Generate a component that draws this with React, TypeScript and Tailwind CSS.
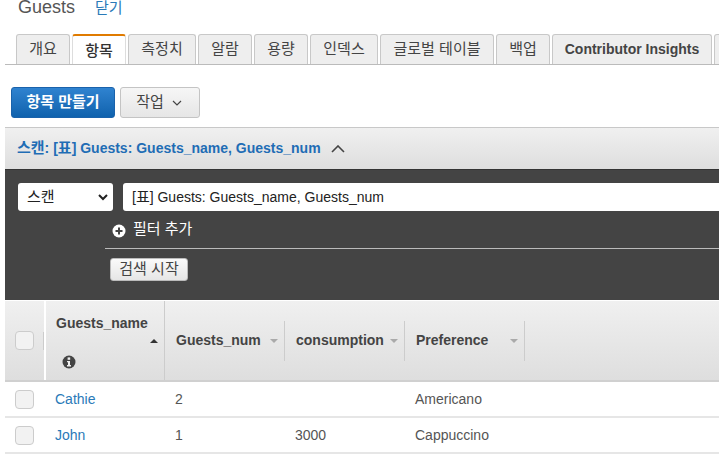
import React from "react";

function Sort({ dark }: { dark?: boolean }) {
  return dark ? (
    <span className="h-0 w-0 border-x-[4px] border-b-[4px] border-x-transparent border-b-[#333]" />
  ) : (
    <span className="h-0 w-0 border-x-[4px] border-t-[4px] border-x-transparent border-t-[#aaa]" />
  );
}

function Check() {
  return <span className="block h-[19px] w-[19px] rounded-[4px] border border-[#ccc] bg-[#f2f2f2]" />;
}

export default function App() {
  const tabBase = "flex h-[30px] shrink-0 items-center justify-center rounded-t-[3px] border border-b-0 border-[#c8c8c8] bg-[#eeeeee] text-[15px] text-[#444]";
  return (
    <div className="h-[455px] w-[719px] overflow-hidden bg-white pl-[5px] font-['Liberation_Sans','Noto_Sans_CJK_KR',sans-serif] text-[14px] text-[#444]">
      <div className="flex h-[15px] items-center pl-[13px]">
        <span className="text-[18px] leading-[15px] text-[#555]">Guests</span>
        <span className="ml-[20px] text-[15px] leading-[15px] text-[#2a7ab8]">닫기</span>
      </div>
      <div className="mt-[19px] flex h-[31px] gap-[2px] overflow-hidden border-b border-[#bbb] pl-[11px]">
        <div className={`${tabBase} w-[54px]`}>개요</div>
        <div className="relative flex h-[31px] w-[54px] shrink-0 items-center justify-center rounded-t-[3px] border-x border-t-2 border-x-[#ddd] border-t-[#e07b00] bg-white pt-[1px] text-[15px] font-medium text-[#333]">항목</div>
        <div className={`${tabBase} w-[68px]`}>측정치</div>
        <div className={`${tabBase} w-[54px]`}>알람</div>
        <div className={`${tabBase} w-[54px]`}>용량</div>
        <div className={`${tabBase} w-[68px]`}>인덱스</div>
        <div className={`${tabBase} w-[114px]`}>글로벌 테이블</div>
        <div className={`${tabBase} w-[54px]`}>백업</div>
        <div className={`${tabBase} w-[160px]`}><span className="text-[14px] font-bold">Contributor Insights</span></div>
        <div className={`${tabBase} w-[40px]`} />
      </div>
      <div className="mt-[22px] flex h-[32px] gap-[5px] pl-[6px]">
        <button className="flex h-[31px] w-[104px] items-center justify-center rounded-[3px] border border-[#1a62ab] bg-gradient-to-b from-[#2f83d0] to-[#0f62ad] text-[15px] font-bold text-white">항목 만들기</button>
        <button className="flex h-[31px] w-[80px] items-center justify-center gap-[8px] rounded-[3px] border border-[#c4c4c4] bg-gradient-to-b from-[#f6f6f6] to-[#e6e6e6] pr-[2px] text-[15px] text-[#444]">
          작업
          <svg width="10" height="6" viewBox="0 0 10 6" fill="none" stroke="#444" strokeWidth="1.2"><path d="M1 1l4 4 4-4" /></svg>
        </button>
      </div>
      <div className="mt-[8px] flex h-[42px] items-center gap-[10px] border-t border-[#c8c8c8] bg-gradient-to-b from-[#f0f0f0] to-[#dedede] pl-[12px]">
        <span className="text-[14px] font-bold text-[#1f6db5]"><span className="text-[15px]">스캔</span>: [<span className="text-[15px]">표</span>] Guests: Guests_name, Guests_num</span>
        <svg width="14" height="8" viewBox="0 0 14 8" fill="none" stroke="#444" strokeWidth="1.6"><path d="M1 7l6-6 6 6" /></svg>
      </div>
      <div className="h-[131px] border-t border-[#333] bg-[#444444]">
        <div className="flex gap-[10px] pl-[13px] pt-[13px]">
          <div className="flex h-[28px] w-[95px] items-center justify-between rounded-[3px] bg-white pl-[9px] pr-[5px] text-[15px] text-[#222]">
            <span>스캔</span>
            <svg width="10" height="7" viewBox="0 0 10 7" fill="none" stroke="#222" strokeWidth="2"><path d="M1 1l4 4 4-4" /></svg>
          </div>
          <div className="flex h-[28px] flex-1 items-center whitespace-pre rounded-l-[3px] bg-white pl-[9px] text-[14px] text-[#222]">[<span className="text-[15px]">표</span>] Guests: Guests_name, Guests_num</div>
        </div>
        <div className="ml-[107px] mt-[8px] flex h-[20px] items-center gap-[7px] text-[15px] text-white">
          <svg className="mt-[3px]" width="14" height="14" viewBox="0 0 14 14"><circle cx="7" cy="7" r="6.500" fill="#fff" /><path d="M7 3.500v7M3.500 7h7" stroke="#444" strokeWidth="2" /></svg>
          필터 추가
        </div>
        <div className="ml-[100px] mt-[9px] border-t border-[#bbb] pl-[5px] pt-[9px]">
          <button className="flex h-[23px] w-[78px] items-center justify-center rounded-[3px] border border-[#bbb] bg-gradient-to-b from-[#fafafa] to-[#e6e6e6] text-[15px] text-[#444]">검색 시작</button>
        </div>
      </div>
      <div className="flex h-[82px] border-b-2 border-t border-b-[#d0d0d0] border-t-white bg-gradient-to-b from-[#f0f0f0] to-[#dedede]">
        <div className="relative flex w-[41px] items-center border-r-2 border-r-white pl-[10px]">
          <Check />
          <span className="absolute right-0 top-[31px] h-[18px] w-px bg-[#ccc]" />
        </div>
        <div className="relative w-[119px] border-r border-r-[#ccc] pl-[10px]">
          <div className="pt-[13px] text-[14px] font-bold leading-[18px]">Guests_name</div>
          <span className="absolute right-[6px] top-[38px] flex"><Sort dark /></span>
          <svg className="absolute left-[16px] top-[54px]" width="14" height="14" viewBox="0 0 14 14"><circle cx="7" cy="7" r="6.500" fill="#444" /><rect x="5.600" y="2.400" width="2.600" height="2.400" fill="#eee" /><path d="M5 6h3v4h1v1.400H5V10h1V7.300H5z" fill="#eee" /></svg>
        </div>
        <div className="flex w-[120px] items-center pl-[11px]">
          <span className="w-[94px] font-bold">Guests_num</span><Sort />
          <span className="ml-[6px] h-[40px] w-px bg-[#ccc]" />
        </div>
        <div className="flex w-[120px] items-center pl-[11px]">
          <span className="w-[94px] font-bold">consumption</span><Sort />
          <span className="ml-[6px] h-[40px] w-px bg-[#ccc]" />
        </div>
        <div className="flex w-[120px] items-center pl-[11px]">
          <span className="w-[94px] font-bold">Preference</span><Sort />
          <span className="ml-[6px] h-[40px] w-px bg-[#ccc]" />
        </div>
      </div>
      {[
        ["Cathie", "2", "", "Americano"],
        ["John", "1", "3000", "Cappuccino"],
      ].map((r) => (
        <div key={r[0]} className="flex h-[36px] items-center border-b-2 border-[#e6e6e6]">
          <div className="flex w-[50px] pl-[10px]"><Check /></div>
          <div className="w-[120px] text-[#2a7ab8]">{r[0]}</div>
          <div className="w-[120px] text-[#555]">{r[1]}</div>
          <div className="w-[120px] text-[#555]">{r[2]}</div>
          <div className="text-[#555]">{r[3]}</div>
        </div>
      ))}
    </div>
  );
}
